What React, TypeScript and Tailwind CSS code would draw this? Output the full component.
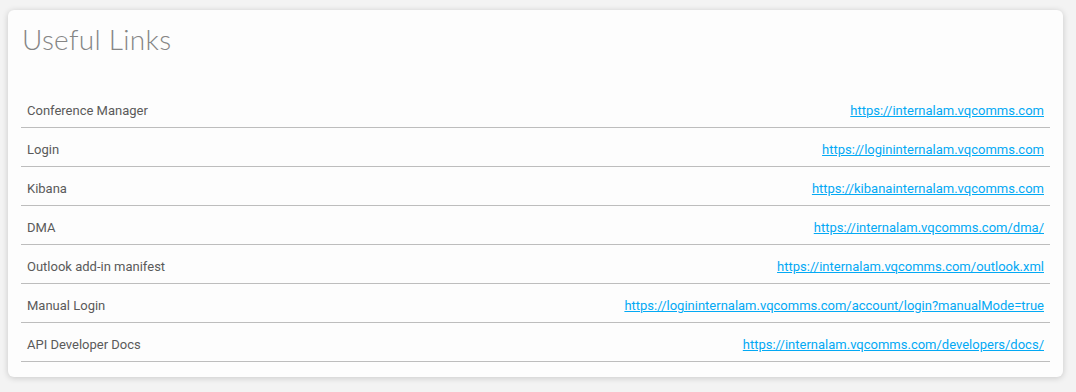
import React from "react";

const links: { label: string; url: string }[] = [
  { label: "Conference Manager", url: "https://internalam.vqcomms.com" },
  { label: "Login", url: "https://logininternalam.vqcomms.com" },
  { label: "Kibana", url: "https://kibanainternalam.vqcomms.com" },
  { label: "DMA", url: "https://internalam.vqcomms.com/dma/" },
  { label: "Outlook add-in manifest", url: "https://internalam.vqcomms.com/outlook.xml" },
  { label: "Manual Login", url: "https://logininternalam.vqcomms.com/account/login?manualMode=true" },
  { label: "API Developer Docs", url: "https://internalam.vqcomms.com/developers/docs/" },
];

export default function App() {
  return (
    <div className="min-h-[392px] w-full bg-[#f3f3f3] pt-[10px] pb-[15px] pl-[8px] pr-[13px]">
      <div className="rounded-[6px] bg-[#fdfdfd] shadow-[0_1px_6px_rgba(0,0,0,0.18)] px-[13px] pt-[12px] pb-[15px]">
        <h2 className="text-[28px] leading-[34px] font-light text-[#858585] pl-[1px] font-['Lato','Open_Sans',sans-serif] tracking-[0.3px]">
          Useful Links
        </h2>
        <div className="mt-[33px] font-['Roboto','Liberation_Sans',sans-serif] text-[13px] leading-[20px]">
          {links.map((l) => (
            <div
              key={l.label}
              className="flex items-center justify-between pt-[12px] pb-[6px] px-[6px] border-b border-[#bdbdbd]"
            >
              <span className="text-[#5a5a5a]">{l.label}</span>
              <a href="#" className="text-[#03a9f4] underline">
                {l.url}
              </a>
            </div>
          ))}
        </div>
      </div>
    </div>
  );
}
